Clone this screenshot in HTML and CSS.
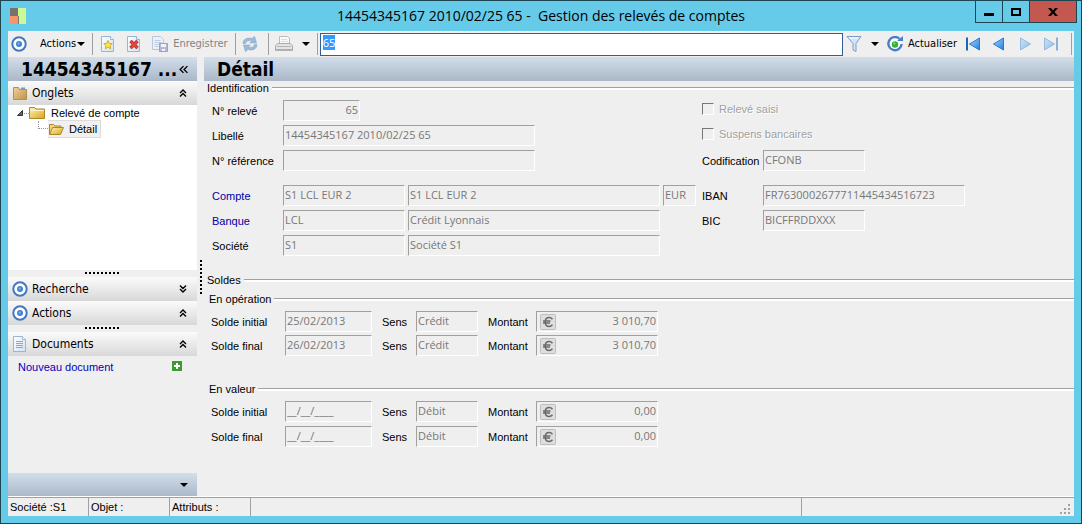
FILE: index.html
```html
<!DOCTYPE html>
<html lang="fr">
<head>
  <meta charset="UTF-8" />
  <meta name="viewport" content="width=device-width, initial-scale=1.0"/>
  <title>Gestion des relevés de comptes</title>
  <link rel="stylesheet" href="styles.css">
</head>
<body>

  <!-- Icônes réutilisées -->
  <svg class="sprites" aria-hidden="true">
    <defs>
      <linearGradient id="bleu" x1="0" y1="0" x2="1" y2="1">
        <stop offset="0" stop-color="#a8d8ff"/><stop offset="1" stop-color="#1c7fe0"/>
      </linearGradient>
      <linearGradient id="jaune" x1="0" y1="0" x2="1" y2="1">
        <stop offset="0" stop-color="#fff3b0"/><stop offset="1" stop-color="#d9a520"/>
      </linearGradient>
      <linearGradient id="brun" x1="0" y1="0" x2="1" y2="1">
        <stop offset="0" stop-color="#f0d298"/><stop offset="1" stop-color="#c1924a"/>
      </linearGradient>
      <linearGradient id="page" x1="0" y1="0" x2="1" y2="1">
        <stop offset="0" stop-color="#ffffff"/><stop offset="1" stop-color="#cfe2f5"/>
      </linearGradient>
    </defs>
    <symbol id="i-cible" viewBox="0 0 16 16">
      <circle cx="8" cy="8" r="6.7" fill="#fff" stroke="#4377c0" stroke-width="2"/>
      <circle cx="8" cy="8" r="3" fill="#3f80d0"/>
      <circle cx="7.6" cy="7.6" r="1.2" fill="#7bb0ea"/>
    </symbol>
    <symbol id="i-page" viewBox="0 0 16 16">
      <path d="M1.500.5h9l3 3v12h-12z" fill="url(#page)" stroke="#9bb4d0"/>
      <path d="M10.500.5v3h3" fill="#fff" stroke="#9bb4d0"/>
    </symbol>
    <symbol id="i-fleche" viewBox="0 0 8 4"><path d="M0 0h8L4 4z" fill="#000"/></symbol>
    <symbol id="i-haut" viewBox="0 0 8 8">
      <path d="M1 4l3-3 3 3M1 7.5l3-3 3 3" fill="none" stroke="#000" stroke-width="1.4"/>
    </symbol>
    <symbol id="i-bas" viewBox="0 0 8 8">
      <path d="M1 .5l3 3 3-3M1 4l3 3 3-3" fill="none" stroke="#000" stroke-width="1.4"/>
    </symbol>
    <symbol id="i-dossier" viewBox="0 0 16 16">
      <path d="M.5 13.500v-11h5l1.500 1.500h8.500v9.500z" fill="url(#jaune)" stroke="#b08526"/>
      <path d="M1 5.500h14" stroke="#fff6cf"/>
    </symbol>
    <symbol id="i-euro" viewBox="0 0 16 16">
      <rect x=".5" y=".5" width="15" height="15" rx="1" fill="#dedede" stroke="#bdbdbd"/>
      <path d="M12.500 5.200C11.500 4 10.500 3.500 9.200 3.500C6.500 3.500 5.200 5.500 5.200 8s1.300 4.500 4 4.500c1.300 0 2.300-.5 3.300-1.700M3 7h7.500M3 9h7" fill="none" stroke="#6a6a6a" stroke-width="1.500"/>
    </symbol>
  </svg>

  <div class="fenetre">

    <!-- Barre de titre -->
    <header class="titre">
      <svg class="logo" viewBox="0 0 16 16">
        <path d="M0 0h8v8H0z" fill="#77706e"/><path d="M0 8h8v8H0z" fill="#fa9468"/>
        <path d="M8 0h8v16H9V8H8z" fill="#c8fb94"/><path d="M8 8v8h1V8z" fill="#777"/>
      </svg>
      <h1>14454345167 2010/02/25 65 -&nbsp; Gestion des relevés de comptes</h1>
      <div class="controles">
        <button class="reduire" title="Réduire"><svg viewBox="0 0 10 10"><path d="M0 6h10v3H0z"/></svg></button>
        <button class="agrandir" title="Agrandir"><svg viewBox="0 0 10 10"><path fill-rule="evenodd" d="M0 1h10v8H0zM2 3v4h6V3z"/></svg></button>
        <button class="fermer" title="Fermer"><svg viewBox="0 0 10 10"><path d="M0 1h3l2 2.500L7 1h3L6.500 5 10 9H7L5 6.500 3 9H0l3.500-4z"/></svg></button>
      </div>
    </header>

    <div class="contenu">

      <!-- Barre d'outils -->
      <div class="outils">
        <button class="outil actions" title="Menu des actions">
          <svg class="icone"><use href="#i-cible"/></svg>
          <span>Actions</span>
          <svg class="fleche"><use href="#i-fleche"/></svg>
        </button>
        <span class="sep"></span>
        <button class="outil" title="Nouveau">
          <svg class="icone" viewBox="0 0 16 16"><use href="#i-page"/>
            <path d="M8 4.500l1.300 2.800 3 .3-2.200 2.100.6 3.100L8 11.300l-2.700 1.500.6-3.100-2.200-2.100 3-.3z" fill="#ffe14a" stroke="#c9a21c" stroke-width=".8"/>
          </svg>
        </button>
        <button class="outil" title="Supprimer">
          <svg class="icone" viewBox="0 0 16 16"><use href="#i-page"/>
            <path d="M4.500 5l7 7m0-7l-7 7" stroke="#a02a24" stroke-width="3.400"/>
            <path d="M4.500 5l7 7m0-7l-7 7" stroke="#f0443a" stroke-width="2"/>
          </svg>
        </button>
        <button class="outil" disabled>
          <svg class="icone" viewBox="0 0 16 16">
            <path d="M.5.5h8l3 3v10H.5z" fill="#edf2f8" stroke="#b7c6d8"/>
            <path d="M2.500 4.500h6M2.500 6.500h7M2.500 8.500h4M2.500 10.500h4" stroke="#b9cce2"/>
            <path d="M7.500 7.500h8v8h-8z" fill="#b4b9da" stroke="#9a9fc6"/>
            <path d="M9 8h5v3H9zM10 13h3v2h-3z" fill="#f3f4fa"/>
          </svg>
          <span>Enregistrer</span>
        </button>
        <span class="sep"></span>
        <button class="outil seul" title="Recharger" disabled>
          <svg class="icone" viewBox="0 0 16 16" fill="#9fbad8" stroke="#86a5ca" stroke-width=".6">
            <path d="M1 7.500C1 3.500 5 1 10 2.500L12.500.3 14.500 7H7.800l2-2C6.500 4 4 5 3.500 7.500z"/>
            <path d="M15 8.500c0 4-4 6.500-9 5l-2.500 2.200L1.500 9h6.700l-2 2c3.300 1 5.800 0 6.300-2.500z"/>
          </svg>
        </button>
        <span class="sep"></span>
        <button class="outil imprimer" title="Imprimer">
          <svg class="icone-large" viewBox="0 0 18 16">
            <path d="M4.500 8V.5h8l2 2V8z" fill="#fafafa" stroke="#bbb"/>
            <path d="M6 3.500h6M6 5.500h7" stroke="#ddd"/>
            <path d="M.5 9.500L3 7.500h12l2.500 2v5H.5z" fill="#e4e4e4" stroke="#aaa"/>
            <path d="M2 10.500h14" stroke="#b5b5b5"/><path d="M1 14h16" stroke="#b0b0b0" stroke-width="2"/>
          </svg>
          <svg class="fleche"><use href="#i-fleche"/></svg>
        </button>
        <span class="sep"></span>
        <input class="recherche" id="recherche" type="text" value="65" aria-label="Recherche">
        <button class="outil filtre" title="Filtrer">
          <svg class="icone" viewBox="0 0 16 16">
            <path d="M1 .5h14L10 7.500v8l-3-1.500V7.500z" fill="#d5e4f7" stroke="#7f9cc8"/>
            <path d="M3 2h9" stroke="#fff"/>
          </svg>
          <svg class="fleche"><use href="#i-fleche"/></svg>
        </button>
        <button class="outil">
          <svg class="icone" viewBox="0 0 16 16">
            <path d="M12.500 2.800A6.600 6.600 0 1 0 14.600 8" fill="#fff" stroke="#467fc5" stroke-width="2.400"/>
            <path d="M10 5h6V0z" fill="#467fc5"/>
            <circle cx="8" cy="8.500" r="3.200" fill="#35b235"/><circle cx="7.300" cy="7.600" r="1" fill="#8fe08a"/>
          </svg>
          <span>Actualiser</span>
        </button>
        <div class="navigation">
          <button class="nav" title="Premier"><svg viewBox="0 0 16 14"><path d="M14.500 1v12L4.500 7z" fill="url(#bleu)" stroke="#2c78cc"/><path d="M1 .5h2v13H1z" fill="#1c65b8"/></svg></button>
          <button class="nav" title="Précédent"><svg viewBox="0 0 16 14"><path d="M12.500 1v12L2.500 7z" fill="url(#bleu)" stroke="#2c78cc"/></svg></button>
          <button class="nav" title="Suivant" disabled><svg viewBox="0 0 16 14"><path d="M3.500 1v12l10-6z" fill="url(#bleu)" stroke="#2c78cc"/></svg></button>
          <button class="nav" title="Dernier" disabled><svg viewBox="0 0 16 14"><path d="M1.500 1v12l10-6z" fill="url(#bleu)" stroke="#2c78cc"/><path d="M13 .5h2v13h-2z" fill="#1c65b8"/></svg></button>
        </div>
        <span class="sep"></span>
      </div>

      <div class="corps">

        <!-- Volet gauche -->
        <aside class="volet">
          <div class="bandeau">
            <h2>14454345167 ...</h2>
            <button class="replier" title="Replier"><svg viewBox="0 0 8 8"><path d="M4 1L1 4l3 3M7.500 1l-3 3 3 3" fill="none" stroke="#000" stroke-width="1.200"/></svg></button>
          </div>
          <button class="section">
            <svg class="icone" viewBox="0 0 16 16"><path d="M1.500 14.500v-12h5l1 2h7v10z" fill="url(#brun)" stroke="#b58f4c"/><path d="M9 2.500h4v2H9z" fill="#6f9ac9"/></svg>
            <span>Onglets</span>
            <svg class="chevron"><use href="#i-haut"/></svg>
          </button>
          <ul class="arbre">
            <li>
              <svg class="noeud" viewBox="0 0 8 8"><path d="M6.500 1.500v5h-5z" fill="#666" stroke="#333"/></svg>
              <span class="pointille"></span>
              <svg class="icone"><use href="#i-dossier"/></svg>
              <span class="element">Relevé de compte</span>
            </li>
            <li class="enfant">
              <span class="branche"></span>
              <span class="choisi">
                <svg class="icone" viewBox="0 0 16 16">
                  <path d="M1.500 13.500v-10h4l1.500 1.500h6v3" fill="#f3d67e" stroke="#b08526"/>
                  <path d="M1.500 13.500l3-7h11l-3 7z" fill="url(#jaune)" stroke="#b08526"/>
                </svg>
                <span class="element">Détail</span>
              </span>
            </li>
          </ul>
          <div class="poignee"></div>
          <button class="section">
            <svg class="icone"><use href="#i-cible"/></svg>
            <span>Recherche</span>
            <svg class="chevron"><use href="#i-bas"/></svg>
          </button>
          <button class="section">
            <svg class="icone"><use href="#i-cible"/></svg>
            <span>Actions</span>
            <svg class="chevron"><use href="#i-haut"/></svg>
          </button>
          <div class="poignee"></div>
          <button class="section">
            <svg class="icone" viewBox="0 0 16 16"><use href="#i-page"/><path d="M4 5.500h7M4 7.500h7M4 9.500h7M4 11.500h7" stroke="#7da9dc"/></svg>
            <span>Documents</span>
            <svg class="chevron"><use href="#i-haut"/></svg>
          </button>
          <div class="documents">
            <a href="#">Nouveau document</a>
            <button class="ajouter" title="Ajouter"><svg viewBox="0 0 10 10"><path d="M0 0h10v10H0z" fill="#3c9a35"/><path d="M5 2v6M2 5h6" stroke="#fff" stroke-width="2"/></svg></button>
          </div>
          <div class="bandeau bas">
            <button class="replier" title="Plus"><svg class="fleche"><use href="#i-fleche"/></svg></button>
          </div>
        </aside>

        <div class="separateur"></div>

        <!-- Détail du relevé -->
        <main class="detail">
          <div class="bandeau"><h2>Détail</h2></div>

          <form>
            <fieldset class="groupe">
              <legend>Identification</legend>
              <div class="grille">
                <label for="numero">N° relevé</label>
                <input class="champ court droite" id="numero" value="65" disabled>
                <span class="case"><input type="checkbox" id="saisi" disabled><label for="saisi">Relevé saisi</label></span>

                <label for="libelle">Libellé</label>
                <input class="champ double" id="libelle" value="14454345167 2010/02/25 65" disabled>
                <span class="case"><input type="checkbox" id="suspens" disabled><label for="suspens">Suspens bancaires</label></span>

                <label for="reference">N° référence</label>
                <input class="champ double" id="reference" value="" disabled>
                <label class="second" for="codification">Codification</label>
                <input class="champ demi" id="codification" value="CFONB" disabled>
              </div>
              <div class="grille">
                <label class="lien" for="compte">Compte</label>
                <input class="champ" id="compte" value="S1 LCL EUR 2" disabled>
                <input class="champ" aria-label="Nom du compte" value="S1 LCL EUR 2" disabled>
                <input class="champ" aria-label="Devise" value="EUR" disabled>
                <label class="second" for="iban">IBAN</label>
                <input class="champ" id="iban" value="FR7630002677711445434516723" disabled>

                <label class="lien" for="banque">Banque</label>
                <input class="champ" id="banque" value="LCL" disabled>
                <input class="champ" aria-label="Nom de la banque" value="Crédit Lyonnais" disabled>
                <label class="second" for="bic">BIC</label>
                <input class="champ demi" id="bic" value="BICFFRDDXXX" disabled>

                <label for="societe">Société</label>
                <input class="champ" id="societe" value="S1" disabled>
                <input class="champ" aria-label="Nom de la société" value="Société S1" disabled>
              </div>
            </fieldset>

            <fieldset class="groupe soldes">
              <legend>Soldes</legend>

              <fieldset class="groupe sous-groupe">
                <legend>En opération</legend>
                <div class="lignes serre">
                  <label for="op-date1">Solde initial</label>
                  <input class="champ" id="op-date1" value="25/02/2013" disabled>
                  <label for="op-sens1">Sens</label>
                  <input class="champ" id="op-sens1" value="Crédit" disabled>
                  <label for="op-montant1">Montant</label>
                  <div class="montant"><button type="button" title="Devise" disabled><svg><use href="#i-euro"/></svg></button><input id="op-montant1" value="3 010,70" disabled></div>

                  <label for="op-date2">Solde final</label>
                  <input class="champ" id="op-date2" value="26/02/2013" disabled>
                  <label for="op-sens2">Sens</label>
                  <input class="champ" id="op-sens2" value="Crédit" disabled>
                  <label for="op-montant2">Montant</label>
                  <div class="montant"><button type="button" title="Devise" disabled><svg><use href="#i-euro"/></svg></button><input id="op-montant2" value="3 010,70" disabled></div>
                </div>
              </fieldset>

              <fieldset class="groupe sous-groupe valeur">
                <legend>En valeur</legend>
                <div class="lignes">
                  <label for="val-date1">Solde initial</label>
                  <input class="champ" id="val-date1" value="__/__/____" disabled>
                  <label for="val-sens1">Sens</label>
                  <input class="champ" id="val-sens1" value="Débit" disabled>
                  <label for="val-montant1">Montant</label>
                  <div class="montant"><button type="button" title="Devise" disabled><svg><use href="#i-euro"/></svg></button><input id="val-montant1" value="0,00" disabled></div>

                  <label for="val-date2">Solde final</label>
                  <input class="champ" id="val-date2" value="__/__/____" disabled>
                  <label for="val-sens2">Sens</label>
                  <input class="champ" id="val-sens2" value="Débit" disabled>
                  <label for="val-montant2">Montant</label>
                  <div class="montant"><button type="button" title="Devise" disabled><svg><use href="#i-euro"/></svg></button><input id="val-montant2" value="0,00" disabled></div>
                </div>
              </fieldset>
            </fieldset>
          </form>
        </main>
      </div>

      <!-- Barre d'état -->
      <footer class="etat">
        <span>Société :S1</span>
        <span>Objet :</span>
        <span>Attributs :</span>
        <span class="large"></span>
        <span class="fin"><svg viewBox="0 0 12 12" fill="#a0a0a0"><path d="M9 1h2v2H9zM5 5h2v2H5zM9 5h2v2H9zM1 9h2v2H1zM5 9h2v2H5zM9 9h2v2H9z"/></svg></span>
      </footer>
    </div>
  </div>

  <script>
    const recherche = document.getElementById("recherche");
    recherche.focus();
    recherche.select();
  </script>
</body>
</html>
```
FILE: styles.css
```css
* {
  box-sizing: border-box;
}

body {
  margin: 0;
  font-family: "Liberation Sans", Arial, sans-serif;
  font-size: 11px;
  line-height: 14px;
  color: #000;
}

button, input {
  font: inherit;
  color: inherit;
  margin: 0;
}

button {
  border: none;
  background: none;
  padding: 0;
}

svg {
  display: block;
  flex: none;
}

.sprites {
  position: absolute;
  width: 0;
  height: 0;
}

.fenetre {
  min-height: 100vh;
  display: flex;
  flex-direction: column;
  background-color: #66cae9;
  border: 1px solid #1d4552;
  padding: 0 7px 7px;
}

/* Barre de titre */
.titre {
  height: 30px;
  display: grid;
  grid-template-columns: 1fr auto 1fr;
  align-items: center;
}

.logo {
  width: 16px;
  height: 16px;
  margin-left: 2px;
}

.titre h1 {
  margin: 0;
  font-family: "Open Sans", "Noto Sans", sans-serif;
  font-size: 14px;
  line-height: 20px;
  font-weight: normal;
}

.controles {
  display: flex;
  justify-self: end;
  align-self: start;
  margin-right: -3px;
  border: 1px solid #1d4552;
  border-top: none;
}

.controles button {
  width: 27px;
  height: 21px;
  display: flex;
  align-items: center;
  justify-content: center;
  border-right: 1px solid #1d4552;
}

.controles svg {
  width: 10px;
  height: 10px;
}

.controles .fermer {
  width: 46px;
  border: none;
  background-color: #c45750;
}

.contenu {
  flex: 1;
  display: flex;
  flex-direction: column;
  background-color: #efefef;
}

/* Barre d'outils */
.outils {
  height: 26px;
  display: flex;
  align-items: center;
  font-family: "DejaVu Sans Condensed", "DejaVu Sans", sans-serif;
}

.outil {
  height: 22px;
  padding: 0 5px;
  display: flex;
  align-items: center;
  gap: 5px;
}

.outil:disabled {
  color: #838383;
}

.actions {
  gap: 1px;
  padding: 0 5px 0 3px;
}

.actions span {
  margin-left: 12px;
}

.icone {
  width: 16px;
  height: 16px;
}

.icone-large {
  width: 18px;
  height: 16px;
}

.fleche {
  width: 8px;
  height: 4px;
}

.sep {
  width: 1px;
  height: 22px;
  margin: 0 2px;
  background-color: #a0a0a0;
}

.seul {
  padding: 0 8px 0 4px;
}

.imprimer {
  gap: 9px;
  padding: 0 5px 0 4px;
}

.filtre {
  gap: 9px;
  padding: 0 3px;
}

.recherche {
  flex: 1;
  min-width: 0;
  height: 23px;
  padding: 0 2px 3px;
  border: 1px solid #2f5f93;
  background-color: #fff;
  font-family: "Open Sans", "Noto Sans", sans-serif;
  outline: none;
}

.recherche::selection {
  background-color: #3399ff;
  color: #fff;
}

.navigation {
  display: flex;
  gap: 10px;
  margin: 0 10px 0 3px;
}

.nav svg {
  width: 16px;
  height: 14px;
}

.nav:disabled {
  opacity: 0.45;
}

/* Volet gauche */
.corps {
  flex: 1;
  display: flex;
}

.bandeau {
  height: 24px;
  display: flex;
  align-items: center;
  justify-content: space-between;
  padding: 0 9px 0 13px;
  background-image: linear-gradient(#d3deea, #a9b7c7);
}

.bandeau h2 {
  margin: 0;
  font-family: "DejaVu Sans Condensed", "DejaVu Sans", sans-serif;
  font-size: 19px;
  line-height: 24px;
  white-space: nowrap;
}

.volet {
  width: 189px;
  flex: none;
  display: flex;
  flex-direction: column;
}

.replier svg {
  width: 9px;
  height: 9px;
}

.replier .fleche {
  width: 8px;
  height: 4px;
}

.bas {
  justify-content: flex-end;
}

.section {
  height: 24px;
  display: flex;
  align-items: center;
  gap: 4px;
  padding: 0 10px 0 4px;
  background-image: linear-gradient(#fbfbfb, #d8d8d8);
  font-family: "DejaVu Sans Condensed", "DejaVu Sans", sans-serif;
  font-size: 12px;
}

.chevron {
  width: 8px;
  height: 8px;
  margin-left: auto;
}

.arbre {
  flex: 165 0 0;
  margin: 0;
  padding: 0 8px;
  list-style: none;
  background-color: #fff;
}

.arbre li {
  height: 16px;
  display: flex;
  align-items: center;
}

.noeud {
  width: 8px;
  height: 8px;
}

.pointille {
  width: 5px;
  border-top: 1px dotted #999;
}

.element {
  margin-left: 6px;
}

.arbre .enfant {
  padding-left: 22px;
}

.branche {
  width: 10px;
  height: 8px;
  align-self: flex-start;
  border: 1px dotted #999;
  border-width: 0 0 1px 1px;
}

.choisi {
  display: flex;
  align-items: center;
  padding-right: 3px;
  background-color: #f0f0f0;
  border: 1px solid #dcdcdc;
  border-left: none;
}

.choisi .element {
  margin-left: 5px;
}

.poignee {
  height: 7px;
  padding-top: 2px;
}

.poignee::before {
  content: "";
  display: block;
  width: 35px;
  height: 2px;
  margin: 0 auto;
  background-image: repeating-linear-gradient(90deg, #000 0 2px, transparent 2px 4px);
}

.documents {
  flex: 113 0 0;
  display: flex;
  align-items: flex-start;
  justify-content: space-between;
  padding: 4px 15px 0 10px;
}

.documents a {
  color: #0000c0;
  text-decoration: none;
}

.ajouter svg {
  width: 10px;
  height: 10px;
  margin-top: 1px;
}

.separateur {
  width: 7px;
  flex: none;
  display: flex;
  align-items: center;
  justify-content: center;
}

.separateur::before {
  content: "";
  width: 2px;
  height: 35px;
  background-image: repeating-linear-gradient(#000 0 2px, transparent 2px 4px);
}

/* Formulaire */
.detail {
  flex: 1;
  min-width: 0;
}

.groupe {
  min-width: 0;
  margin: 0;
  padding: 0 0 0 3px;
  border: none;
}

.groupe legend {
  width: 100%;
  display: flex;
  align-items: center;
  gap: 3px;
  padding: 0;
}

.groupe legend::after {
  content: "";
  flex: 1;
  height: 2px;
  border-top: 1px solid #a0a0a0;
  background-color: #fff;
}

.grille {
  display: grid;
  grid-template-columns: 68px 122px 252px 33px 61px 202px;
  grid-auto-rows: 21px;
  gap: 4px 3px;
  align-items: center;
  margin-top: 5px;
  padding-left: 5px;
}

.grille + .grille {
  margin-top: 14px;
}

.grille > label:not(.second) {
  grid-column: 1;
}

.second {
  grid-column: 5;
  padding-left: 3px;
}

.lien {
  color: #0000a8;
}

.champ, .montant {
  width: 100%;
  min-width: 0;
  height: 21px;
  border: 1px solid;
  border-color: #a0a0a0 #fff #fff #a0a0a0;
  background-color: #efefef;
}

.champ, .montant input {
  padding: 0 1px 3px;
  font-family: "Open Sans", "Noto Sans", sans-serif;
  color: #777;
}

.court {
  width: 77px;
  grid-column: 2 / 4;
}

.droite {
  text-align: right;
}

.double {
  width: 252px;
  grid-column: 2 / 4;
}

.demi {
  width: 102px;
}

.case {
  grid-column: 5 / 7;
  display: flex;
  align-items: center;
  gap: 5px;
  padding: 0 0 4px 3px;
  color: #a0a0a0;
  text-shadow: 1px 1px #fff;
}

.case input {
  appearance: none;
  width: 12px;
  height: 12px;
  border: 1px solid;
  border-color: #777 #fff #fff #777;
}

.soldes {
  margin-top: 17px;
}

.sous-groupe {
  margin-top: 5px;
  padding-left: 2px;
}

.valeur {
  margin-top: 26px;
}

.lignes {
  display: grid;
  grid-template-columns: 64px 87px 24px 62px 38px 122px;
  grid-auto-rows: 21px;
  gap: 4px 10px;
  align-items: center;
  margin-top: 5px;
  padding-left: 2px;
}

.serre {
  row-gap: 3px;
}

.montant {
  display: flex;
  padding: 1px 0 0 3px;
}

.montant svg {
  width: 16px;
  height: 16px;
}

.montant input {
  flex: 1;
  min-width: 0;
  border: none;
  background: none;
  text-align: right;
}

/* Barre d'état */
.etat {
  height: 19px;
  display: flex;
  border-top: 1px solid #a0a0a0;
  box-shadow: 0 -1px #fff;
}

.etat span {
  width: 81px;
  padding: 2px 2px 0;
  border-right: 1px solid #a0a0a0;
}

.etat .large {
  flex: 553;
}

.etat .fin {
  flex: 269;
  display: flex;
  justify-content: flex-end;
  align-items: flex-end;
  padding: 0 3px 1px;
  border: none;
}

.etat svg {
  width: 12px;
  height: 12px;
}
```
